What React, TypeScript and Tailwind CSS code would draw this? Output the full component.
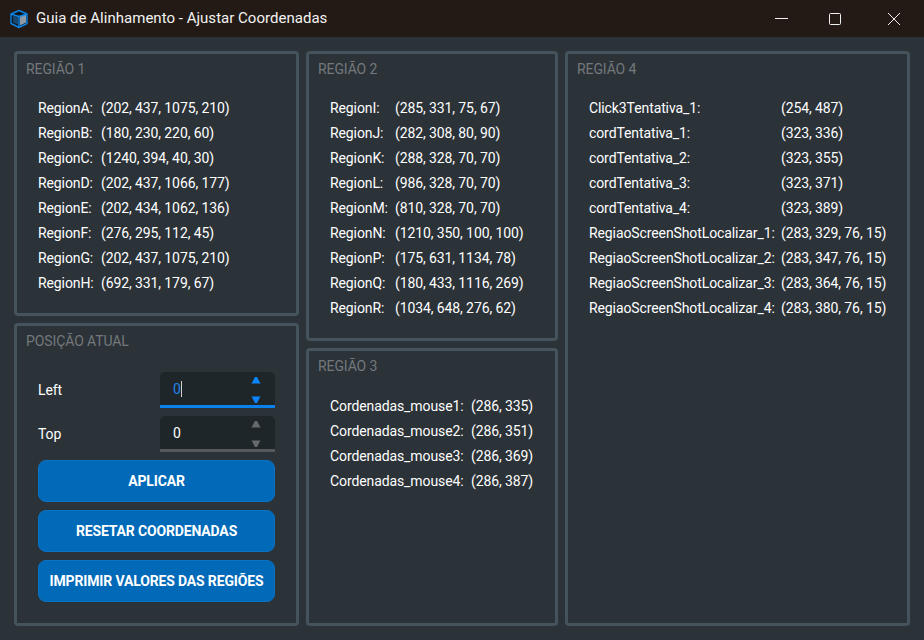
const REGIAO1 = [
  ["RegionA:", "(202, 437, 1075, 210)"],
  ["RegionB:", "(180, 230, 220, 60)"],
  ["RegionC:", "(1240, 394, 40, 30)"],
  ["RegionD:", "(202, 437, 1066, 177)"],
  ["RegionE:", "(202, 434, 1062, 136)"],
  ["RegionF:", "(276, 295, 112, 45)"],
  ["RegionG:", "(202, 437, 1075, 210)"],
  ["RegionH:", "(692, 331, 179, 67)"],
];

const REGIAO2 = [
  ["RegionI:", "(285, 331, 75, 67)"],
  ["RegionJ:", "(282, 308, 80, 90)"],
  ["RegionK:", "(288, 328, 70, 70)"],
  ["RegionL:", "(986, 328, 70, 70)"],
  ["RegionM:", "(810, 328, 70, 70)"],
  ["RegionN:", "(1210, 350, 100, 100)"],
  ["RegionP:", "(175, 631, 1134, 78)"],
  ["RegionQ:", "(180, 433, 1116, 269)"],
  ["RegionR:", "(1034, 648, 276, 62)"],
];

const REGIAO3 = [
  ["Cordenadas_mouse1:", "(286, 335)"],
  ["Cordenadas_mouse2:", "(286, 351)"],
  ["Cordenadas_mouse3:", "(286, 369)"],
  ["Cordenadas_mouse4:", "(286, 387)"],
];

const REGIAO4 = [
  ["Click3Tentativa_1:", "(254, 487)"],
  ["cordTentativa_1:", "(323, 336)"],
  ["cordTentativa_2:", "(323, 355)"],
  ["cordTentativa_3:", "(323, 371)"],
  ["cordTentativa_4:", "(323, 389)"],
  ["RegiaoScreenShotLocalizar_1:", "(283, 329, 76, 15)"],
  ["RegiaoScreenShotLocalizar_2:", "(283, 347, 76, 15)"],
  ["RegiaoScreenShotLocalizar_3:", "(283, 364, 76, 15)"],
  ["RegiaoScreenShotLocalizar_4:", "(283, 380, 76, 15)"],
];

function Painel({ titulo, className, children }: { titulo: string; className: string; children: React.ReactNode }) {
  return (
    <div className={`border-[3px] border-[#44535c] rounded-[4px] px-[9px] pt-[6px] ${className}`}>
      <div className="text-[14px] leading-[19px] text-[#74787b]">{titulo}</div>
      {children}
    </div>
  );
}

function Linhas({ dados, colClass, topo = "mt-[17px]" }: { dados: string[][]; colClass: string; topo?: string }) {
  return (
    <div className={`grid ${colClass} ${topo} pl-[12px] text-white`}>
      {dados.map(([nome, valor]) => (
        <div key={nome} className="contents">
          <div className="h-[25px] leading-[25px] whitespace-nowrap">{nome}</div>
          <div className="h-[25px] leading-[25px] whitespace-nowrap">{valor}</div>
        </div>
      ))}
    </div>
  );
}

function Spin({ valor, ativo }: { valor: string; ativo?: boolean }) {
  const seta = ativo ? "fill-[#0a84ff]" : "fill-[#666a6d]";
  return (
    <div className={`relative w-[115px] h-[36px] rounded-t-[5px] bg-[#1f2629] border-b-[3px] ${ativo ? "border-[#0a80ea]" : "border-[#55595c]"}`}>
      <div className="pl-[13px] pt-[1px] h-[33px] flex items-center">
        <span className={ativo ? "text-[#1f84ea]" : "text-white"}>{valor}</span>
        {ativo && <span className="w-px h-[16px] bg-[#d0d0d0]" />}
      </div>
      <svg className="absolute left-[89px] top-[5px]" width="14" height="30" viewBox="0 0 14 30">
        <polygon className={seta} points="6,0 8,0 11.5,6.5 2.5,6.5" />
        <polygon className={seta} points="2.5,19.5 11.5,19.5 8,26 6,26" />
      </svg>
    </div>
  );
}

function Botao({ texto }: { texto: string }) {
  return (
    <button className="h-[42px] w-[237px] rounded-[8px] bg-[#0069b8] border border-[#0a72c4] text-white font-bold text-[14px] tracking-[-0.15px] whitespace-nowrap">
      {texto}
    </button>
  );
}

export default function App() {
  return (
    <div className="w-[924px] h-[640px] flex flex-col bg-[#2b3238] text-[14px] tracking-[-0.1px] overflow-hidden font-['Roboto',sans-serif]">
      <div className="h-[37px] flex items-center bg-[#231a15] text-[#f2f2f2] shrink-0">
        {/* logo */}
        <svg className="ml-[9px]" width="20" height="20" viewBox="0 0 20 20" fill="none">
          <path d="M10 2 L18 5.5 V14.5 L10 18.5 L2 14.5 V5.5 Z" fill="#10161c" />
          <path d="M11 7 L17 5 V13.5 L11 16.5 Z" fill="#8f9aa5" />
          <path d="M4 6.5 L9 8 V15.5 L4 13.5 Z" fill="#17466e" />
          <path d="M10 1.5 L18 5 V14.5 L10 18.5 L2 14.5 V5 Z M10 7.5 V18.5 M2 5 L10 7.5 L18 5" stroke="#0a84e6" strokeWidth="1.4" strokeLinejoin="round" />
        </svg>
        <span className="ml-[7px] text-[15px] tracking-[0.02px]">Guia de Alinhamento - Ajustar Coordenadas</span>
        <div className="ml-auto flex items-center relative text-[#f0f0f0]">
          <svg className="mr-[41px]" width="13" height="12" viewBox="0 0 13 12" fill="none">
            <path d="M0 5.5 H13" stroke="currentColor" />
          </svg>
          <svg className="mr-[47px]" width="12" height="12" viewBox="0 0 12 12" fill="none">
            <rect x="0.5" y="0.5" width="11" height="11" rx="1" stroke="currentColor" />
          </svg>
          <svg className="mr-[24px]" width="12" height="12" viewBox="0 0 12 12" fill="none">
            <path d="M0 0 L12 12 M12 0 L0 12" stroke="currentColor" />
          </svg>
        </div>
      </div>
      <div className="flex-1 flex gap-[7px] p-[14px]">
        <div className="w-[285px] flex flex-col gap-[7px]">
          <Painel titulo="REGIÃO 1" className="h-[265px]">
            <Linhas dados={REGIAO1} colClass="grid-cols-[63px_1fr]" />
          </Painel>
          <Painel titulo="POSIÇÃO ATUAL" className="flex-1">
            <div className="mt-[21px] pl-[12px] text-white">
              <div className="flex items-center justify-between w-[237px]">
                <span>Left</span>
                <Spin valor="0" ativo />
              </div>
              <div className="flex items-center justify-between w-[237px] mt-[8px]">
                <span>Top</span>
                <Spin valor="0" />
              </div>
              <div className="flex flex-col gap-[8px] mt-[8px]">
                <Botao texto="APLICAR" />
                <Botao texto="RESETAR COORDENADAS" />
                <Botao texto="IMPRIMIR VALORES DAS REGIÕES" />
              </div>
            </div>
          </Painel>
        </div>
        <div className="w-[252px] flex flex-col gap-[7px]">
          <Painel titulo="REGIÃO 2" className="h-[290px]">
            <Linhas dados={REGIAO2} colClass="grid-cols-[65px_1fr]" />
          </Painel>
          <Painel titulo="REGIÃO 3" className="flex-1">
            <Linhas dados={REGIAO3} colClass="grid-cols-[141px_1fr]" topo="mt-[18px]" />
          </Painel>
        </div>
        <Painel titulo="REGIÃO 4" className="flex-1">
          <Linhas dados={REGIAO4} colClass="grid-cols-[192px_1fr]" />
        </Painel>
      </div>
    </div>
  );
}
